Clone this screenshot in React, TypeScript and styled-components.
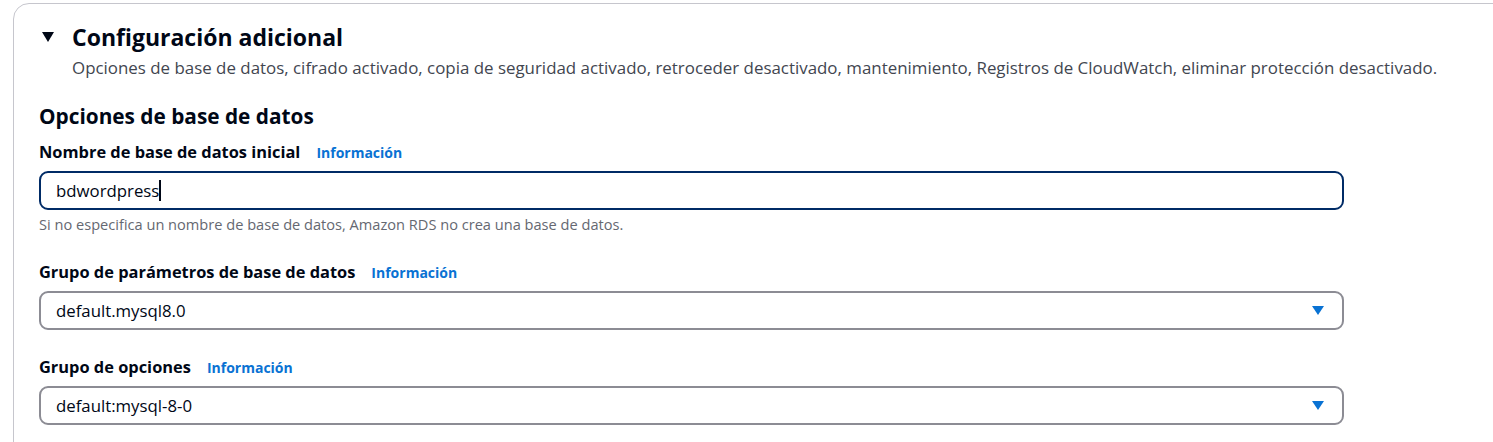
import React from "react";
import styled, { createGlobalStyle } from "styled-components";

const Global = createGlobalStyle`
  html, body { margin: 0; padding: 0; background: #ffffff; overflow: hidden; }
  body { font-family: "Open Sans", "Noto Sans", Arial, sans-serif; color: #000716; }
`;

const Card = styled.section`
  margin: 3px 0 0 13px;
  width: 1560px;
  min-height: 480px;
  box-sizing: border-box;
  border: 1px solid #c6c6cd;
  border-radius: 16px;
  padding: 17px 0 0 25px;
`;

const Header = styled.div`
  display: grid;
  grid-template-columns: 33px auto;
  align-items: center;
  row-gap: 4px;
`;

const Caret = styled.svg`
  width: 12px;
  height: 10px;
  margin-left: 3px;
`;

const Title = styled.h2`
  margin: 0;
  font-size: 23px;
  line-height: 32px;
  font-weight: 700;
  color: #000716;
`;

const Subtitle = styled.p`
  grid-column: 2;
  margin: 0;
  font-size: 16.9px;
  line-height: 22px;
  color: #424650;
`;

const SectionTitle = styled.h3`
  margin: 23px 0 0;
  font-size: 20.8px;
  line-height: 28px;
  font-weight: 700;
`;

const Field = styled.div<{ $gap?: number }>`
  margin-top: ${(p) => p.$gap ?? 0}px;
  width: 1305px;
`;

const LabelRow = styled.div`
  display: flex;
  align-items: baseline;
  gap: 16px;
  height: 24px;
`;

const Label = styled.label`
  font-size: 16.4px;
  font-weight: 700;
  line-height: 24px;
`;

const Info = styled.a`
  font-size: 14px;
  font-weight: 700;
  color: #0972d3;
  text-decoration: none;
`;

const Control = styled.div<{ $focused?: boolean }>`
  margin-top: 7px;
  height: 39px;
  box-sizing: border-box;
  border: 2px solid ${(p) => (p.$focused ? "#002b66" : "#8c8c94")};
  border-radius: 9px;
  display: flex;
  align-items: center;
  justify-content: space-between;
  padding: 0 18px 0 15px;
  font-size: 16.8px;
  color: #000716;
`;

const Value = styled.span`
  display: inline-flex;
  align-items: center;
`;

const TextCursor = styled.span`
  display: inline-block;
  width: 1.5px;
  height: 21px;
  background: #000716;
`;

const Hint = styled.p`
  margin: 4px 0 0;
  font-size: 14.6px;
  line-height: 20px;
  color: #656871;
`;

const DropIcon = () => (
  <svg width="12" height="9" viewBox="0 0 12 9">
    <path d="M0 0 H12 L6 9 Z" fill="#0972d3" />
  </svg>
);

export default function App() {
  return (
    <>
      <Global />
      <Card>
        <Header>
          <Caret viewBox="0 0 12 10">
            <path d="M0 0 H12 L6 10 Z" fill="#000716" />
          </Caret>
          <Title>Configuración adicional</Title>
          <Subtitle>
            Opciones de base de datos, cifrado activado, copia de seguridad activado, retroceder desactivado,
            mantenimiento, Registros de CloudWatch, eliminar protección desactivado.
          </Subtitle>
        </Header>

        <SectionTitle>Opciones de base de datos</SectionTitle>

        <Field $gap={10}>
          <LabelRow>
            <Label>Nombre de base de datos inicial</Label>
            <Info href="#">Información</Info>
          </LabelRow>
          <Control $focused>
            <Value>
              bdwordpress
              <TextCursor />
            </Value>
          </Control>
          <Hint>Si no especifica un nombre de base de datos, Amazon RDS no crea una base de datos.</Hint>
        </Field>

        <Field $gap={26}>
          <LabelRow>
            <Label>Grupo de parámetros de base de datos</Label>
            <Info href="#">Información</Info>
          </LabelRow>
          <Control>
            <Value>default.mysql8.0</Value>
            <DropIcon />
          </Control>
        </Field>

        <Field $gap={25}>
          <LabelRow>
            <Label>Grupo de opciones</Label>
            <Info href="#">Información</Info>
          </LabelRow>
          <Control>
            <Value>default:mysql-8-0</Value>
            <DropIcon />
          </Control>
        </Field>
      </Card>
    </>
  );
}
